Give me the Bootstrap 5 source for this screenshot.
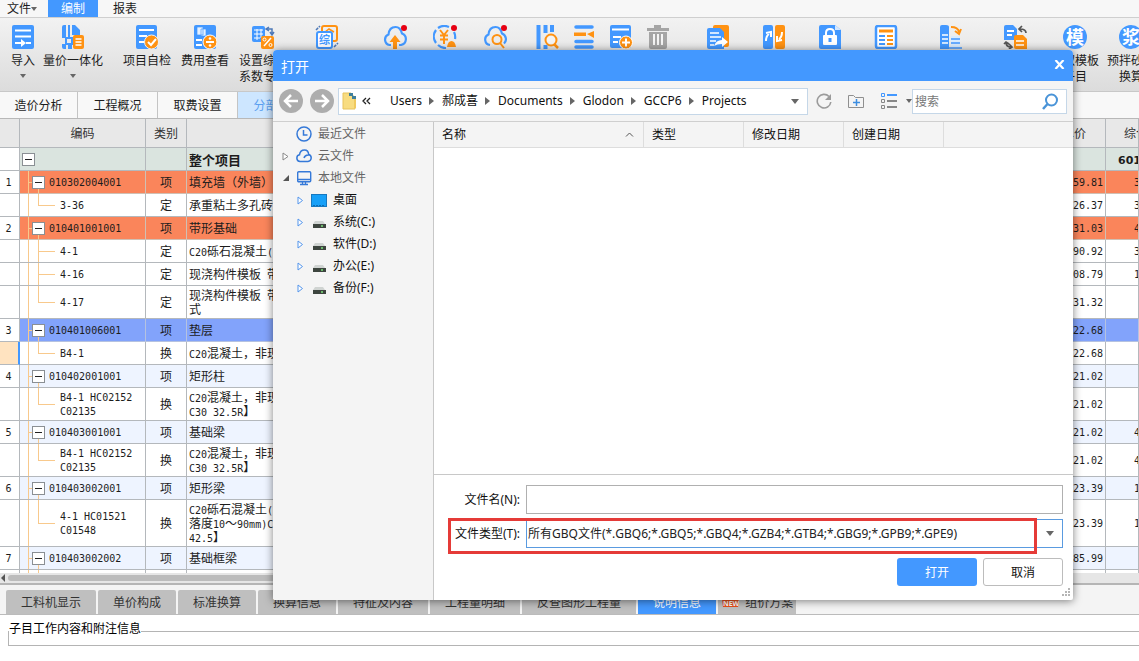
<!DOCTYPE html>
<html lang="zh-CN">
<head>
<meta charset="utf-8">
<meta name="viewport" content="width=device-width, initial-scale=1">
<title>打开</title>
<link href="https://cdn.jsdelivr.net/npm/bootstrap@5.3.0/dist/css/bootstrap.min.css" rel="stylesheet">
<style>
:root{--blue:#4398ff;--ora:#ff9212;--line:#b4b8bc}
body{font:12px/16px "Noto Sans","Noto Sans CJK SC",sans-serif;color:#1c1c1c;background:#f4f4f4}
button{font:inherit;color:inherit;background:none;border:0;padding:0}
svg{display:block;flex:none}
.caret{width:0;height:0;border:3px solid transparent;border-top:4px solid #666;border-bottom:0;display:inline-block;vertical-align:middle}
/* menu */
.menubar{height:18px;background:#f7f7f7;border-bottom:1px solid #cfcfcf;padding-left:7px;gap:3px}
.menubar button{height:17px;line-height:16px}
.menubar .on{background:var(--blue);color:#fff;width:50px}
/* ribbon */
.ribbon{height:73px;background:linear-gradient(#f2f2f2,#dcdcdc);overflow:hidden;padding-left:3px}
.tool{padding-top:7px;display:flex;flex-direction:column;align-items:center;white-space:nowrap;width:var(--w)}
.tool span{margin-top:4px;line-height:16px;text-align:center}
.tool .caret{margin-top:5px}
.g1{--w:40px}.g1 .wide{width:60px}
.g2{--w:58px;margin-left:15px}.g2 .wide{width:70px}
.g3{--w:50px;margin-left:8px}
.g4{--w:37px;margin-left:8px}
.g5{--w:56px;margin-left:14px}
.g6{--w:64px;margin-left:5px}
.g7{--w:56px}
/* module tabs */
.modules{height:28px;background:#f8f8f8;border-top:1px solid #c8c8c8;border-bottom:1px solid #b8b8b8}
.modules button{width:79px;border-right:1px solid #c4c4c4;box-sizing:content-box;text-align:center;padding-top:2px}
.modules button:first-child{width:77px}
.modules .on{background:#cde6ff;color:#5b9ff0}
/* quantity sheet */
.sheet{flex:1 1 0;min-height:0;overflow:hidden;background:#fff}
.sheet table{width:100%;table-layout:fixed;border-collapse:separate;border-spacing:0;line-height:14px}
.sheet td,.sheet th{border-right:1px solid var(--line);border-bottom:1px solid var(--line);height:23px;padding:3px 2px 1px;white-space:nowrap;overflow:hidden;vertical-align:middle}
.sheet thead th{height:29px;background:#e8e8e8;font-weight:400;text-align:center;color:#333}
.sheet td:nth-child(3){text-align:center}
.sheet td:nth-child(5){text-align:right}
.sheet td:nth-child(6){padding-left:28px}
.sheet tbody th{font-weight:400;text-align:center;padding-right:4px}
.sheet tbody th,.m,.sheet td:nth-child(5),.sheet td:nth-child(6),.sheet td.code{font-family:"DejaVu Sans Mono",monospace;font-size:10px}
.m{line-height:0;white-space:pre}
.sheet .root td{background:#dae4df;font-weight:700;font-size:13px}
.sheet .root td:nth-child(6){padding-left:12px;font:700 11px "DejaVu Sans",sans-serif}
.sheet .item td{background-color:#eef4ff}
.sheet .hot td{background-color:#fa855b;border-color:#d0c0b4}
.sheet .sel td{background-color:#82a3fb;border-color:#b5c2e0}
.sheet th.cur{background:#ffe3c0;border-right:2px solid var(--blue)}
.sheet td.code{padding-left:40px;background-repeat:no-repeat;--t:linear-gradient(#f8c98c,#f8c98c)}
.sheet .item td.code{padding-left:12px;background-image:var(--t),var(--t),var(--t);background-size:1px 100%,5px 1px,1px 6px;background-position:8px 0,8px 11px,18px 100%}
.sheet .sub td.code{background-image:var(--t),var(--t),var(--t);background-size:1px 100%,1px 50%,17px 1px;background-position:8px 0,18px 0,18px 50%}
.sheet .more td.code{background-size:1px 100%,1px 100%,17px 1px}
.sheet .item td.code,.sheet .root td:nth-child(2){padding-top:0;padding-bottom:0}
.fold{width:13px;height:13px;border:1px solid #8a8f94;background:linear-gradient(#222,#222) center/7px 1px no-repeat #fff;display:block}
.item .code>div{gap:4px}
.item .code span{padding-top:2px}
.hbar{height:12px;background:#e6e6e6;border-bottom:2px solid #b5b5b5}
.hbar i{height:6px;border-radius:3px;background:#bcbcbc}
/* detail tabs */
.details-tabs{padding:5px 6px 0;gap:2px;height:29px}
.details-tabs button{background:#bfbfbf;padding:2px 15px 0;color:#333;border-radius:2px 2px 0 0}
.details-tabs .on{background:var(--blue);color:#fff}
.details-tabs .fresh{padding:2px 3px 0 4px;gap:6px}
.note{background:#fff;height:47px;padding:6px 0 0 8px;border-top:1px solid #bbb}
.note fieldset{border:1px solid #b4b4b4;border-right:0;height:25px}
.note legend{font-size:12px;line-height:16px;width:auto;float:none;margin:0;padding:0 0 4px;color:#000}
/* dialog */
.dlg{position:absolute;left:273px;right:66px;top:50px;bottom:61px;background:#fff;border-radius:4px 4px 2px 2px;box-shadow:0 1px 8px rgba(0,0,0,.5);color:#111;overflow:hidden}
.dlg-title{height:31px;background:var(--blue);color:#fff;font-size:14px;padding:2px 8px 0}
.dlg-title button{margin-bottom:4px}
.bar{height:41px;background:#f4f4f4;border-bottom:1px solid #cfcfcf;padding:0 6px}
.addr{height:27px;background:#fff;border:1px solid #c5d7e8;padding:0 8px 0 3px}
.addr a{color:inherit;text-decoration:none}
.addr a:first-of-type{margin-left:19px}
.addr .sep{border:4px solid transparent;border-left:5px solid #666;border-right:0;margin:0 8px 0 7px;width:0;height:0}
.find{width:155px;position:relative}
.find input{height:25px;width:100%;border:1px solid #c5d7e8;padding:0 30px 0 2px;background:#fff}
.find input::placeholder{color:#777;opacity:1}
.find svg{position:absolute;right:8px;top:4px}
.places{width:161px;background:#f4f4f4;border-right:1px solid #c8c8c8;padding-top:1px}
.places li{height:22px;display:flex;align-items:center;color:#666;padding-left:9px}
.places .tw{width:14px}
.places .ic{width:22px}
.places .l2{color:#111;padding-left:24px}
.cols{height:26px;background:#f4f4f4;border-bottom:1px solid #ddd}
.cols button{width:100px;border-right:1px solid #ddd;text-align:left;padding-left:8px}
.cols .c1{width:210px;padding-right:9px}
.form-area{border-top:1px solid #c8c8c8;padding:10px 10px 14px 14px}
.frow{height:29px;position:relative}
.frow label{width:72px;text-align:right;margin-right:6px;white-space:nowrap}
.frow input,.frow select{flex:1;min-width:0;height:29px;border:1px solid #b0b0b0;background:#fff;padding:0 1px;color:#222;border-radius:0}
.frow select{appearance:none;border-color:#5a9be0;background:url("data:image/svg+xml,%3Csvg xmlns='http://www.w3.org/2000/svg' width='8' height='5'%3E%3Cpath d='M0 0h8L4 5z' fill='%23666'/%3E%3C/svg%3E") no-repeat right 8px center}
.mark-box{position:absolute;left:0;right:26px;top:-1px;height:36px;border:3px solid #e53b38;pointer-events:none}
.act{width:80px;height:28px;border-radius:3px;padding-top:1px}
.act.ok{background:var(--blue);color:#fff}
.act.no{border:1px solid #bcbcbc;background:#fff}
.grip{position:absolute;right:2px;bottom:3px}
</style>
</head>
<body class="vh-100 d-flex flex-column overflow-hidden position-relative">
<nav class="menubar d-flex flex-shrink-0">
  <button class="pe-2">文件<i class="caret"></i></button>
  <button class="on">编制</button>
  <button class="px-2 ms-1">报表</button>
</nav>

<div class="ribbon d-flex flex-shrink-0">
  <div class="d-flex g1">
    <button class="tool"><svg width="24" height="24"><rect x="1" width="22" height="24" rx="2" fill="#4398ff"/><path d="M4 5.500h16M4 11.500h16M4 18h8" stroke="#fff" stroke-width="2"/><path d="M10 14l5 4-5 4zM15 17h5v2h-5z" fill="#fff"/></svg><span>导入</span><i class="caret"></i></button>
    <button class="tool wide"><svg width="24" height="24"><path d="M1 2q0-2 2-2h2v13H1zM7 0h2v12H7zM11 0h3l5 5v5h-8zM1 19h4v5H3q-2 0-2-2zM7 19h4v5H7z" fill="#4398ff"/><path d="M5 13h6v6H5z" fill="none" stroke="#4398ff" stroke-width="2"/><rect x="12" y="10" width="11" height="14" rx="2" fill="#ff9212"/><path d="M14.500 14h6M14.500 17h6M14.500 20h6" stroke="#fff" stroke-width="1.500"/></svg><span>量价一体化</span><i class="caret"></i></button>
  </div>
  <div class="d-flex g2">
    <button class="tool"><svg width="24" height="24"><rect x="1" width="21" height="24" rx="2" fill="#4398ff"/><path d="M4 5h15M4 11h8M4 17h5" stroke="#fff" stroke-width="2"/><circle cx="16.500" cy="17" r="7" fill="#ff9212" stroke="#f2f2f2"/><path d="M13 17l3 3 5-6" fill="none" stroke="#fff" stroke-width="2"/></svg><span>项目自检</span></button>
    <button class="tool"><svg width="24" height="24"><rect x="1" width="22" height="24" rx="2" fill="#4398ff"/><path d="M4 2h6v8H4zM8 4h5v7H8z" fill="#e6f1ff" stroke="#4398ff" stroke-width=".7"/><path d="M3 15h6M3 20h6" stroke="#fff" stroke-width="2"/><circle cx="17" cy="17" r="7" fill="#ff9212" stroke="#fff"/><path d="M13 17h8" stroke="#fff" stroke-width="2"/><circle cx="17" cy="13.500" r="1.300" fill="#fff"/><circle cx="17" cy="20.500" r="1.300" fill="#fff"/></svg><span>费用查看</span></button>
    <button class="tool"><svg width="24" height="24"><rect x="1" y="1" width="13" height="16" rx="2" fill="#4398ff"/><path d="M3 5h9M3 9h9M3 13h6M6 4v11M10 4v9" stroke="#fff"/><path d="M16 4h5v5M18 2l-3 2 3 2M19 7l2 3 2-3" fill="none" stroke="#4e79b8" stroke-width="1.500"/><rect x="10" y="11" width="13" height="13" rx="2" fill="#ff9212"/><path d="M13 21l7-8" stroke="#fff" stroke-width="1.500"/><circle cx="13.500" cy="14.500" r="1.500" fill="none" stroke="#fff"/><circle cx="19.500" cy="20" r="1.500" fill="none" stroke="#fff"/></svg><span>设置综合<br>系数专项</span></button>
    <button class="tool wide" aria-label="综合"><svg width="24" height="24"><rect x="7" y="1" width="15" height="15" rx="2" fill="none" stroke="#ff9212" stroke-width="2"/><path d="M10 7l4-3 5 3M11 9h7" fill="none" stroke="#ff9212" stroke-width="1.500"/><rect x="2" y="7" width="15" height="16" rx="2" fill="#fff" stroke="#4398ff" stroke-width="2"/><text x="4" y="19" font-size="11" font-weight="700" fill="#4398ff">综</text><path d="M1 5l4-4M19 22l4-4" stroke="#4e79b8" stroke-width="1.500" stroke-dasharray="3 1"/></svg></button>
  </div>
  <div class="d-flex g3">
    <button class="tool" aria-label="上传"><svg width="24" height="24"><path d="M8 20H6.500a5.500 5.500 0 0 1-1-10.500C6 4.500 9 2 12.500 2S18 4.500 19 8.500a6 6 0 0 1-1 11.500h-2" fill="none" stroke="#4398ff" stroke-width="2.200"/><path d="M12 10l5.500 7H14v7h-4v-7H6.500z" fill="#ff9212"/><circle cx="21" cy="3" r="3" fill="#e60012"/></svg></button>
    <button class="tool" aria-label="询价"><svg width="24" height="24"><path d="M16 2A11 11 0 0 0 5 3M3 5a11 11 0 0 0 0 13M5 20a11 11 0 0 0 8 3M21 7a11 11 0 0 1 1 7" fill="none" stroke="#4398ff" stroke-width="2.200"/><path d="M7 5l4 5 4-5M11 10v9M7 10.500h8M7 14.500h8" fill="none" stroke="#ff9212" stroke-width="2"/><path d="M14 22q1-6 4.500-6t4.500 6z" fill="#ff9212"/><circle cx="21" cy="3" r="3" fill="#e60012"/></svg></button>
    <button class="tool" aria-label="云检查"><svg width="24" height="24"><path d="M7 20a5.500 5.500 0 0 1-1.500-10.500C6 4.500 9 2 12.500 2S18 4.500 19 8.500a6 6 0 0 1 2 10" fill="none" stroke="#4398ff" stroke-width="2.200"/><circle cx="14" cy="14.500" r="4.500" fill="none" stroke="#ff9212" stroke-width="2"/><path d="M17 18l4 5" stroke="#ff9212" stroke-width="2"/><circle cx="21" cy="3" r="3" fill="#e60012"/></svg></button>
  </div>
  <div class="d-flex g4">
    <button class="tool" aria-label="查询"><svg width="24" height="24"><path d="M3.500 0v24M10.500 0v8M10.500 20v4M17 0v7" stroke="#4398ff" stroke-width="4"/><circle cx="16" cy="15" r="5.500" fill="#f4f4f4" stroke="#ff9212" stroke-width="2"/><path d="M19 19l4 4" stroke="#ff9212" stroke-width="2.500"/></svg></button>
    <button class="tool" aria-label="插入"><svg width="24" height="24"><path d="M4 2h16M4 16.500h16M4 22h16" stroke="#4398ff" stroke-width="3.500" stroke-linecap="round"/><path d="M2 7.500h12v3.500H2zM15 9l7-3v7z" fill="#ff9212"/></svg></button>
    <button class="tool" aria-label="补充"><svg width="24" height="24"><rect x="1" width="21" height="23" rx="2" fill="#4398ff"/><path d="M3 4.500h17M4 12h8M4 17h5" stroke="#fff" stroke-width="2"/><circle cx="17" cy="17.500" r="6.500" fill="#ff9212" stroke="#fff"/><path d="M13 17.500h8M17 13.500v8" stroke="#fff" stroke-width="2"/></svg></button>
    <button class="tool" aria-label="删除"><svg width="24" height="24"><path d="M1 3h7V0h7v3h8v3H1zM3 7h18v15q0 2-2 2H5q-2 0-2-2z" fill="#a5a5a5"/><path d="M8 9v11M12 9v11M16 9v11" stroke="#f4f4f4" stroke-width="2"/></svg></button>
  </div>
  <div class="d-flex g5">
    <button class="tool" aria-label="标准组价"><svg width="24" height="24"><rect x="7" width="16" height="22" rx="2" fill="#ff9212"/><path d="M1 5q0-2 2-2h11l4 4v17H3q-2 0-2-2z" fill="#4398ff"/><path d="M4 8h9M4 12h11M4 16h6M4 20h4" stroke="#fff" stroke-width="1.700"/><path d="M8 21q2-6 8-6v-3l6 5-6 5v-3q-5 0-8 2z" fill="#fff"/></svg></button>
    <button class="tool" aria-label="替换数据"><svg width="24" height="24"><rect x="1" width="10" height="24" rx="2" fill="#4398ff"/><rect x="13" width="10" height="24" rx="2" fill="#ff9212"/><path d="M4 16q0-5 3-7M4 8l5-1v5M20 7q0 5-3 7M15 11v5l5-1" fill="none" stroke="#fff" stroke-width="2"/></svg></button>
    <button class="tool" aria-label="锁定清单"><svg width="24" height="24"><path d="M1 2q0-2 2-2h14l6 5v19H3q-2 0-2-2z" fill="#4398ff"/><path d="M17 0v5h6z" fill="#d5e8ff"/><rect x="5" y="10" width="14" height="10" rx="1" fill="#fff"/><path d="M8 11V8q0-4 4-4t4 4v3" fill="none" stroke="#fff" stroke-width="2"/><path d="M12 13v4" stroke="#4398ff" stroke-width="3"/></svg></button>
    <button class="tool" aria-label="整理清单"><svg width="24" height="24"><rect x="2" y="1" width="20" height="22" rx="2" fill="#fff" stroke="#4398ff" stroke-width="2.500"/><path d="M5 6h14" stroke="#ff9212" stroke-width="3"/><path d="M5 11h6M5 15h6M5 19h6" stroke="#4398ff" stroke-width="2"/><path d="M13 11h6M13 15h6M13 19h6" stroke="#ff9212" stroke-width="2"/></svg></button>
  </div>
  <div class="d-flex g6">
    <button class="tool" aria-label="单价构成"><svg width="24" height="24"><path d="M1 2q0-2 2-2h4q3 0 3 2v22H1z" fill="#4398ff"/><path d="M3 10h6M3 14h6M3 18h6" stroke="#fff" stroke-width="1.700"/><path d="M12 11h9v12h-9z" fill="#d8ebff"/><path d="M12 14h9M12 18h9M1 23h22" stroke="#4398ff" stroke-width="1.500"/><path d="M12 2q7 0 8 5M16 6l4 3 2-5" fill="none" stroke="#ff9212" stroke-width="2"/></svg></button>
    <button class="tool" aria-label="转换"><svg width="24" height="24"><path d="M1 2q0-2 2-2h7l4 4v11H1z" fill="#4398ff"/><path d="M4 6h7M4 10h5" stroke="#fff" stroke-width="2"/><path d="M11 12q0-2 2-2h7l4 4v10H13q-2 0-2-2z" fill="#ff9212"/><path d="M13 16h8M13 20h8" stroke="#fff" stroke-width="1.700"/><path d="M23 8q0-4-6-4M19 1l-3 3 3 3M3 17q0 5 5 5M1 19l2-2 3 2M6 19l3 3-3 2" fill="none" stroke="#555" stroke-width="1.700"/></svg></button>
  </div>
  <div class="d-flex g7">
    <button class="tool"><svg width="24" height="24"><circle cx="12" cy="12" r="12" fill="#4398ff"/><text x="3" y="18.500" font-size="18" font-weight="700" fill="#fff">模</text></svg><span>提取模板<br>子目</span></button>
    <button class="tool"><svg width="24" height="24"><circle cx="12" cy="12" r="12" fill="#4398ff"/><text x="3" y="18.500" font-size="18" font-weight="700" fill="#fff">浆</text></svg><span>预拌砂浆<br>换算</span></button>
  </div>
</div>

<nav class="modules d-flex flex-shrink-0">
  <button>造价分析</button><button>工程概况</button><button>取费设置</button><button class="on">分部分项</button>
</nav>

<main class="sheet">
<table>
  <colgroup><col style="width:20px"><col style="width:126px"><col style="width:41px"><col><col style="width:90px"><col style="width:33px"></colgroup>
  <thead><tr><th></th><th>编码</th><th>类别</th><th></th><th style="text-align:right;padding-right:19px">单价</th><th style="text-align:left;padding-left:18px">综合</th></tr></thead>
  <tbody>
  <tr class="root"><th></th><td><i class="fold"></i></td><td></td><td>整个项目</td><td></td><td>601</td></tr>
  <tr class="item hot"><th>1</th><td class="code"><div class="d-flex align-items-center"><i class="fold"></i><span>010302004001</span></div></td><td>项</td><td>填充墙（外墙）</td><td>59.81</td><td>3</td></tr>
  <tr class="sub"><th></th><td class="code">3-36</td><td>定</td><td>承重粘土多孔砖</td><td>26.37</td><td>3</td></tr>
  <tr class="item hot"><th>2</th><td class="code"><div class="d-flex align-items-center"><i class="fold"></i><span>010401001001</span></div></td><td>项</td><td>带形基础</td><td>31.03</td><td>4</td></tr>
  <tr class="sub more"><th></th><td class="code">4-1</td><td>定</td><td><span class="m">C20</span>砾石混凝土<span class="m">(</span></td><td>90.92</td><td>3</td></tr>
  <tr class="sub more"><th></th><td class="code">4-16</td><td>定</td><td>现浇构件模板<span class="m"> </span>带</td><td>08.79</td><td>1</td></tr>
  <tr class="sub"><th></th><td class="code">4-17</td><td>定</td><td>现浇构件模板<span class="m"> </span>带<br>式</td><td>31.32</td><td></td></tr>
  <tr class="item sel"><th>3</th><td class="code"><div class="d-flex align-items-center"><i class="fold"></i><span>010401006001</span></div></td><td>项</td><td>垫层</td><td>22.68</td><td></td></tr>
  <tr class="sub"><th class="cur"></th><td class="code">B4-1</td><td>换</td><td><span class="m">C20</span>混凝土，非现</td><td>22.68</td><td></td></tr>
  <tr class="item"><th>4</th><td class="code"><div class="d-flex align-items-center"><i class="fold"></i><span>010402001001</span></div></td><td>项</td><td>矩形柱</td><td>21.02</td><td></td></tr>
  <tr class="sub"><th></th><td class="code">B4-1 HC02152<br>C02135</td><td>换</td><td><span class="m">C20</span>混凝土，非现<br><span class="m">C30 32.5R</span>】</td><td>21.02</td><td></td></tr>
  <tr class="item"><th>5</th><td class="code"><div class="d-flex align-items-center"><i class="fold"></i><span>010403001001</span></div></td><td>项</td><td>基础梁</td><td>21.02</td><td>4</td></tr>
  <tr class="sub"><th></th><td class="code">B4-1 HC02152<br>C02135</td><td>换</td><td><span class="m">C20</span>混凝土，非现<br><span class="m">C30 32.5R</span>】</td><td>21.02</td><td>4</td></tr>
  <tr class="item"><th>6</th><td class="code"><div class="d-flex align-items-center"><i class="fold"></i><span>010403002001</span></div></td><td>项</td><td>矩形梁</td><td>23.39</td><td>1</td></tr>
  <tr class="sub"><th></th><td class="code">4-1 HC01521<br>C01548</td><td>换</td><td><span class="m">C20</span>砾石混凝土<span class="m">(</span><br>落度<span class="m">10</span>～<span class="m">90mm)C</span><br><span class="m">42.5</span>】</td><td>23.39</td><td>1</td></tr>
  <tr class="item"><th>7</th><td class="code"><div class="d-flex align-items-center"><i class="fold"></i><span>010403002002</span></div></td><td>项</td><td>基础框梁</td><td>85.99</td><td></td></tr>
  <tr class="sub"><th></th><td class="code"></td><td></td><td></td><td></td><td></td></tr>
  </tbody>
</table>
</main>
<div class="hbar d-flex align-items-center flex-shrink-0"><svg width="8" height="8"><path d="M5 0v8L1 4z" fill="#555"/></svg><i style="width:60%"></i></div>

<nav class="details-tabs d-flex flex-shrink-0">
  <button>工料机显示</button><button>单价构成</button><button>标准换算</button><button>换算信息</button><button>特征及内容</button><button>工程量明细</button><button>反查图形工程量</button><button class="on">说明信息</button>
  <button class="fresh d-flex align-items-center"><svg width="17" height="10"><path d="M0 1h16l1 3-1 5H1z" fill="#e8501c"/><text x="1" y="8" font-size="7" font-weight="700" fill="#fff">NEW</text></svg>组价方案</button>
</nav>
<section class="note flex-shrink-0"><fieldset><legend>子目工作内容和附注信息</legend></fieldset></section>

<div class="dlg d-flex flex-column" role="dialog" aria-labelledby="dlgTitle">
  <div class="dlg-title d-flex align-items-center justify-content-between flex-shrink-0"><span id="dlgTitle">打开</span>
    <button aria-label="关闭"><svg width="11" height="9"><path d="M1.500 0l8 9M9.500 0l-8 9" stroke="#fff" stroke-width="2.200"/></svg></button></div>
  <div class="bar d-flex align-items-center flex-shrink-0">
    <button aria-label="后退"><svg width="24" height="24"><circle cx="12" cy="12" r="12" fill="#adadad"/><path d="M19 12H6M12 6l-6 6 6 6" fill="none" stroke="#fff" stroke-width="2.500"/></svg></button>
    <button aria-label="前进" style="margin:0 4px 0 7px"><svg width="24" height="24"><circle cx="12" cy="12" r="12" fill="#adadad"/><path d="M5 12h13M12 6l6 6-6 6" fill="none" stroke="#fff" stroke-width="2.500"/></svg></button>
    <div class="addr d-flex align-items-center flex-grow-1">
      <svg width="16" height="18"><path d="M1 1h8l4 5v11H1z" fill="#f8dc80" stroke="#e8c35c"/><path d="M7 1h4v3H7zM10 4h4v3h-4z" fill="#3f7f9c"/><path d="M12 7h2v9h-2z" fill="#f0c95e"/></svg>
      <svg class="ms-1" width="9" height="8"><path d="M4 1L1 4l3 3M8 1L5 4l3 3" fill="none" stroke="#222" stroke-width="1.300"/></svg>
      <a href="#">Users</a><i class="sep"></i><a href="#">郝成喜</a><i class="sep"></i><a href="#">Documents</a><i class="sep"></i><a href="#">Glodon</a><i class="sep"></i><a href="#">GCCP6</a><i class="sep"></i><a href="#">Projects</a>
      <svg class="ms-auto" width="8" height="5"><path d="M0 0h8L4 5z" fill="#666"/></svg>
    </div>
    <button class="ms-2" aria-label="刷新"><svg width="16" height="16"><path d="M13 3.500A6.800 6.800 0 1 0 14.800 9" fill="none" stroke="#9b9b9b" stroke-width="1.600"/><path d="M15 1v6H9z" fill="#9b9b9b"/></svg></button>
    <button class="ms-3" aria-label="新建文件夹"><svg width="16" height="16"><path d="M.5 14.500v-12h5l2 2h8v10z" fill="none" stroke="#8f8f8f"/><path d="M5 9.500h7M8.500 6v7" stroke="#3c8de0" stroke-width="1.500"/></svg></button>
    <button class="ms-3" aria-label="视图"><svg width="18" height="18"><path d="M7 3h10" stroke="#4398ff" stroke-width="2"/><path d="M7 9h10M7 15h10" stroke="#888" stroke-width="2"/><path d="M1.500 1.500h3v3h-3z" fill="none" stroke="#4398ff"/><path d="M1.500 7.500h3v3h-3zM1.500 13.500h3v3h-3z" fill="none" stroke="#888"/></svg></button>
    <i class="caret ms-2"></i>
    <div class="find"><input type="text" placeholder="搜索" aria-label="搜索"><svg width="17" height="17"><circle cx="9.500" cy="7" r="5.500" fill="none" stroke="#4a94d8" stroke-width="2"/><path d="M5.500 11L1 16" stroke="#4a94d8" stroke-width="2.500"/></svg></div>
  </div>
  <div class="d-flex flex-grow-1" style="min-height:0">
    <ul class="places list-unstyled mb-0 flex-shrink-0">
      <li><span class="tw"></span><span class="ic"><svg width="16" height="16"><circle cx="8" cy="8" r="7" fill="none" stroke="#3579d8" stroke-width="1.500"/><path d="M7.500 4v5h4" fill="none" stroke="#3579d8" stroke-width="1.500"/></svg></span>最近文件</li>
      <li><span class="tw"><svg width="7" height="9"><path d="M1 1l5 3.500L1 8z" fill="#fff" stroke="#888"/></svg></span><span class="ic"><svg width="16" height="16"><path d="M4 13.500a3.400 3.400 0 0 1-.5-6.700C4 3.500 6 2 8.500 2s4 1.700 4.200 4.500a3.600 3.600 0 0 1-.7 7zM8 10q1-3.500 5-3" fill="none" stroke="#3579d8" stroke-width="1.500"/></svg></span>云文件</li>
      <li><span class="tw"><svg width="8" height="8"><path d="M7 1v6H1z" fill="#555"/></svg></span><span class="ic"><svg width="16" height="16"><rect x="1.700" y="1.700" width="13" height="10" rx="1" fill="none" stroke="#3579d8" stroke-width="1.400"/><path d="M2 9.500h12M4 14.500h8M6.500 12v2M9.500 12v2" stroke="#3579d8" stroke-width="1.300"/></svg></span>本地文件</li>
      <li class="l2"><span class="tw"><svg width="7" height="9"><path d="M1 1l4.500 3.500L1 8z" fill="#fff" stroke="#5596ec"/></svg></span><span class="ic"><svg width="16" height="13"><rect x=".5" y=".5" width="15" height="12" fill="#17a0f8" stroke="#1778bf"/><path d="M2 11.500h12" stroke="#0b6db4" stroke-dasharray="2 1"/></svg></span>桌面</li>
      <li class="l2"><span class="tw"><svg width="7" height="9"><path d="M1 1l4.500 3.500L1 8z" fill="#fff" stroke="#5596ec"/></svg></span><span class="ic"><svg width="16" height="13"><path d="M4 5h8l2 3H2z" fill="#d0d4d2"/><path d="M2 8h13v4H2z" fill="#3d453f"/><path d="M10 10h2" stroke="#7de07d" stroke-width="1.500"/></svg></span>系统(C:)</li>
      <li class="l2"><span class="tw"><svg width="7" height="9"><path d="M1 1l4.500 3.500L1 8z" fill="#fff" stroke="#5596ec"/></svg></span><span class="ic"><svg width="16" height="13"><path d="M4 5h8l2 3H2z" fill="#d0d4d2"/><path d="M2 8h13v4H2z" fill="#3d453f"/><path d="M10 10h2" stroke="#7de07d" stroke-width="1.500"/></svg></span>软件(D:)</li>
      <li class="l2"><span class="tw"><svg width="7" height="9"><path d="M1 1l4.500 3.500L1 8z" fill="#fff" stroke="#5596ec"/></svg></span><span class="ic"><svg width="16" height="13"><path d="M4 5h8l2 3H2z" fill="#d0d4d2"/><path d="M2 8h13v4H2z" fill="#3d453f"/><path d="M10 10h2" stroke="#7de07d" stroke-width="1.500"/></svg></span>办公(E:)</li>
      <li class="l2"><span class="tw"><svg width="7" height="9"><path d="M1 1l4.500 3.500L1 8z" fill="#fff" stroke="#5596ec"/></svg></span><span class="ic"><svg width="16" height="13"><path d="M4 5h8l2 3H2z" fill="#d0d4d2"/><path d="M2 8h13v4H2z" fill="#3d453f"/><path d="M10 10h2" stroke="#7de07d" stroke-width="1.500"/></svg></span>备份(F:)</li>
    </ul>
    <div class="d-flex flex-column flex-grow-1">
      <div class="cols d-flex"><button class="c1 d-flex align-items-center justify-content-between">名称<svg width="9" height="5"><path d="M1 4.500L4.500 1 8 4.500" fill="none" stroke="#555"/></svg></button><button>类型</button><button>修改日期</button><button>创建日期</button></div>
      <div class="flex-grow-1"></div>
      <form class="form-area" onsubmit="return false">
        <div class="frow d-flex align-items-center"><label for="fn">文件名(N):</label><input id="fn" type="text"></div>
        <div class="frow d-flex align-items-center" style="margin-top:5px"><label for="ft">文件类型(T):</label>
          <select id="ft"><option>所有GBQ文件(*.GBQ6;*.GBQ5;*.GBQ4;*.GZB4;*.GTB4;*.GBG9;*.GPB9;*.GPE9)</option></select><div class="mark-box"></div></div>
        <div class="d-flex justify-content-end" style="gap:6px;margin-top:10px"><button class="act ok" type="submit">打开</button><button class="act no" type="button">取消</button></div>
      </form>
    </div>
  </div>
  <svg class="grip" width="10" height="9"><path d="M7 0h2v2H7zM4 3h2v2H4zM7 3h2v2H7zM1 6h2v2H1zM4 6h2v2H4zM7 6h2v2H7z" fill="#b5b5b5"/></svg>
</div>
<script src="https://cdn.jsdelivr.net/npm/bootstrap@5.3.0/dist/js/bootstrap.bundle.min.js"></script>
</body>
</html>
